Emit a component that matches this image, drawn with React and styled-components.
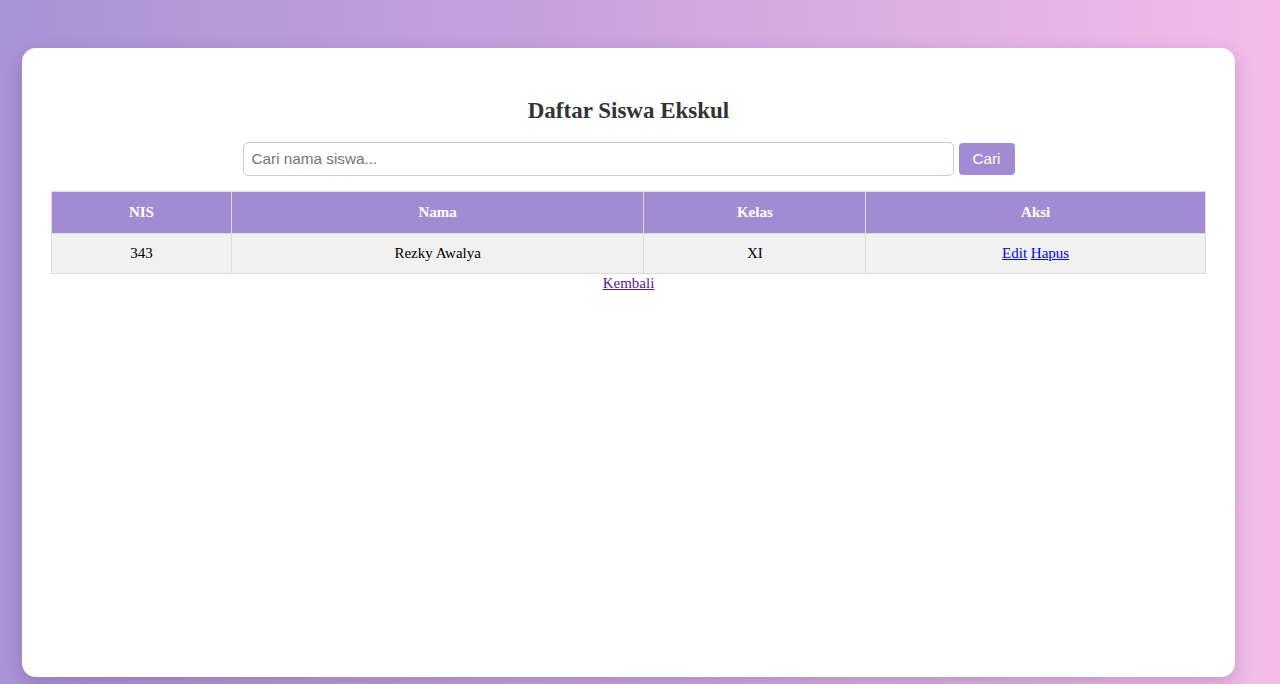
import React from "react";
import styled, { createGlobalStyle } from "styled-components";

const Global = createGlobalStyle`
  html, body { margin: 0; padding: 0; }
  body {
    font-family: "Liberation Serif", "Times New Roman", serif;
    font-size: 15px;
    background: linear-gradient(90deg, #a993d5 0%, #c8a3dd 45%, #f4bde9 100%);
    min-height: 100vh;
  }
`;

const Page = styled.div`
  box-sizing: border-box;
  height: 684px;
  padding: 48px 45px 7px 22px;
  display: flex;
`;

const Card = styled.div`
  flex: 1;
  background: #fff;
  border-radius: 14px;
  box-shadow: 0 6px 18px rgba(60, 30, 90, 0.22);
  padding: 35px 29px;
  display: flex;
  flex-direction: column;
  align-items: center;
`;

const Title = styled.h2`
  margin: 15px 0 18px;
  font-size: 23px;
  font-weight: bold;
  color: #333;
  line-height: 26px;
`;

const SearchForm = styled.form`
  display: flex;
  align-items: center;
  gap: 5px;
  margin-bottom: 15px;
`;

const SearchInput = styled.input`
  box-sizing: border-box;
  width: 711px;
  height: 34px;
  padding: 0 8px;
  border: 1px solid #ccc;
  border-radius: 5px;
  font-family: "Liberation Sans", Arial, sans-serif;
  font-size: 15.3px;
  color: #333;
  &::placeholder { color: #757575; }
  outline: none;
`;

const SearchButton = styled.button`
  box-sizing: border-box;
  width: 56px;
  height: 32px;
  border: none;
  border-radius: 4px;
  background: #a28bd3;
  color: #fff;
  font-family: "Liberation Sans", Arial, sans-serif;
  font-size: 15.3px;
  cursor: pointer;
`;

const Table = styled.table`
  width: 100%;
  border-collapse: collapse;
  font-size: 15px;
`;

const Th = styled.th`
  background: #a28bd3;
  color: #fff;
  font-weight: bold;
  height: 42px;
  padding: 0 10px;
  border: 1px solid #ddd;
  box-sizing: border-box;
  width: ${(p) => p.$w}px;
`;

const Td = styled.td`
  background: #f1f1f1;
  color: #000;
  text-align: center;
  height: 40px;
  padding: 0 10px;
  border: 1px solid #ddd;
  box-sizing: border-box;
`;

const ActionLink = styled.a`
  color: #0000ee;
  text-decoration: underline;
`;

const BackLink = styled.a`
  color: #551a8b;
  text-decoration: underline;
  margin-top: 1px;
  line-height: 17px;
`;

export default function App() {
  const rows = [{ nis: "343", nama: "Rezky Awalya", kelas: "XI" }];
  return (
    <>
      <Global />
      <Page>
        <Card>
          <Title>Daftar Siswa Ekskul</Title>
          <SearchForm onSubmit={(e) => e.preventDefault()}>
            <SearchInput placeholder="Cari nama siswa..." />
            <SearchButton type="submit">Cari</SearchButton>
          </SearchForm>
          <Table>
            <thead>
              <tr>
                <Th $w={180}>NIS</Th>
                <Th $w={413}>Nama</Th>
                <Th $w={222}>Kelas</Th>
                <Th $w={340}>Aksi</Th>
              </tr>
            </thead>
            <tbody>
              {rows.map((r) => (
                <tr key={r.nis}>
                  <Td>{r.nis}</Td>
                  <Td>{r.nama}</Td>
                  <Td>{r.kelas}</Td>
                  <Td>
                    <ActionLink href="#">Edit</ActionLink>{" "}
                    <ActionLink href="#">Hapus</ActionLink>
                  </Td>
                </tr>
              ))}
            </tbody>
          </Table>
          <BackLink href="#">Kembali</BackLink>
        </Card>
      </Page>
    </>
  );
}
